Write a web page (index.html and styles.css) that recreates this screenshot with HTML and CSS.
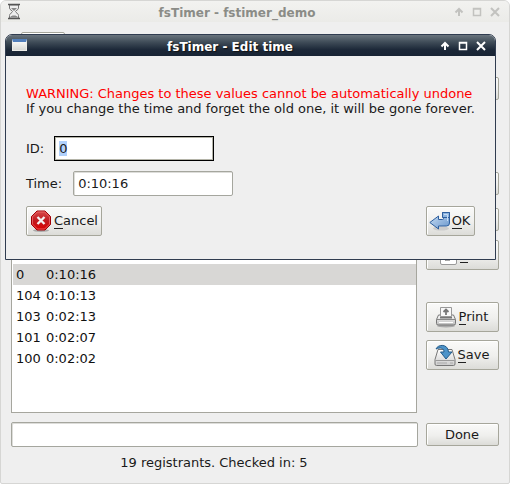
FILE: index.html
```html
<!DOCTYPE html>
<html lang="en">
<head>
<meta charset="utf-8">
<title>fsTimer</title>
<link rel="stylesheet" href="styles.css">
</head>
<body>
<main class="window">
  <header class="titlebar">
    <svg class="hourglass" width="14" height="17" viewBox="0 0 14 17"><path d="M2.500 2v3c0 2 3 2.500 3 3.500s-3 2-3 4V15h9v-2.500c0-2-3-3-3-4s3-1.500 3-3.500V2z" fill="#eee" stroke="#777"/><path d="M4 5h6L7 8zM3.500 14c0-2 7-2 7 0z" fill="#888"/><path d="M1 1.500h12M1 15.500h12" stroke="#555" stroke-width="1.600"/></svg>
    <h1 class="title">fsTimer - fstimer_demo</h1>
    <svg class="controls" width="46" height="12" viewBox="0 0 46 12" fill="none"><path d="M5 10V3M1.500 6.500 5 3l3.500 3.500" stroke-width="2"/><path d="M19.500 2.500h7v7h-7zM19 3h8"/><path d="m37 2 8 8M45 2l-8 8" stroke-width="2"/></svg>
  </header>
  <div class="toolbar"><div class="button tab"></div></div>
  <div class="workspace">
    <div class="list">
      <div class="row selected"><span>0</span><span>0:10:16</span></div>
      <div class="row"><span>104</span><span>0:10:13</span></div>
      <div class="row"><span>103</span><span>0:02:13</span></div>
      <div class="row"><span>101</span><span>0:02:07</span></div>
      <div class="row"><span>100</span><span>0:02:02</span></div>
    </div>
    <div class="side">
      <div class="button small first"></div>
      <div class="button small"></div>
      <div class="button small"></div>
      <div class="button covered"><svg width="17" height="20" viewBox="0 0 17 20"><rect x=".5" y=".5" width="16" height="19" rx="1.500" fill="#fff" stroke="#999"/><path d="M5 15h5l-2-2z" fill="#555" stroke="#555"/></svg><span class="label"><u>E</u>dit</span></div>
      <div class="button print"><svg width="22" height="22" viewBox="0 0 22 22"><defs><linearGradient id="pg" x2="0" y2="1"><stop stop-color="#fff"/><stop offset="1" stop-color="#bbb"/></linearGradient></defs><ellipse cx="11" cy="20" rx="9" ry="1.500" fill="#aaa"/><path d="M3.500 9h15l2 4.500v4q0 1.500-1.500 1.500H3q-1.500 0-1.500-1.500v-4z" fill="url(#pg)" stroke="#777"/><path d="M1.500 13.500h19" stroke="#888"/><path d="M5 11.500h12" stroke="#777" stroke-width="2"/><path d="M5.500 1.500h11v9h-11z" fill="#f8f8f8" stroke="#999"/><path d="M11 9V5M8.500 6 11 3.500 13.500 6" fill="none" stroke="#777" stroke-width="1.800"/><path d="M4 16.500h14" stroke="#fff"/></svg><span class="label"><u>P</u>rint</span></div>
      <div class="button save"><svg width="22" height="23" viewBox="0 0 22 23"><defs><linearGradient id="sg" x2="0" y2="1"><stop stop-color="#fff"/><stop offset="1" stop-color="#ccc"/></linearGradient></defs><path d="M4 5.500h14l3 10v4.500q0 1.500-1.500 1.500h-17Q1 21.500 1 20v-4.500z" fill="url(#sg)" stroke="#777"/><path d="M1.500 16.500h19" stroke="#999"/><path d="M4 18v2M6 18v2M8 18v2M10 18v2M12 18v2M16 19h3" stroke="#aaa"/><path d="M2 5C4 0 14-.5 14.500 8H18l-6 7-5.500-7H10C10 4 6 3 2 5z" fill="#4c93c9" stroke="#245b8a"/></svg><span class="label"><u>S</u>ave</span></div>
    </div>
  </div>
  <div class="command">
    <div class="field"></div>
    <div class="button done"><span>Done</span></div>
  </div>
  <footer class="status">19 registrants. Checked in: 5</footer>

  <section class="dialog">
    <header class="titlebar dark">
      <span class="app-icon"></span>
      <h2 class="title">fsTimer - Edit time</h2>
      <svg class="controls" width="46" height="12" viewBox="0 0 46 12" fill="none"><path d="M5 10V3M1.500 6.500 5 3l3.500 3.500" stroke-width="2"/><path d="M19.500 2.500h7v7h-7zM19 3h8"/><path d="m37 2 8 8M45 2l-8 8" stroke-width="2"/></svg>
    </header>
    <div class="dialog-body">
      <p class="message warning">WARNING: Changes to these values cannot be automatically undone</p>
      <p class="message">If you change the time and forget the old one, it will be gone forever.</p>
      <div class="form-row id-row"><span class="caption">ID:</span><div class="input focused"><span class="selection">0</span></div></div>
      <div class="form-row time-row"><span class="caption">Time:</span><div class="input">0:10:16</div></div>
      <div class="actions">
        <div class="button cancel"><svg width="22" height="22" viewBox="0 0 22 22"><defs><linearGradient id="cg" x2="0" y2="1"><stop stop-color="#d94a4a"/><stop offset=".5" stop-color="#c01c22"/><stop offset="1" stop-color="#d00"/></linearGradient></defs><ellipse cx="11" cy="20.500" rx="8" ry="1.500" fill="#aaa"/><path d="M7 1h8l5.500 5.500v8L15 20H7l-5.500-5.500v-8z" fill="url(#cg)" stroke="#a00006"/><path d="M7.400 2h7.200l4.900 4.900v7.200L14.600 19H7.400l-4.900-4.900V6.900z" fill="none" stroke="#e77" stroke-opacity=".7"/><path d="m7.500 7 7 7M14.500 7l-7 7" stroke="#f4f4f4" stroke-width="2.300"/></svg><span class="label"><u>C</u>ancel</span></div>
        <div class="button ok"><svg width="22" height="21" viewBox="0 0 22 21"><defs><linearGradient id="og" x2="1" y2="1"><stop stop-color="#cfe2f6"/><stop offset="1" stop-color="#6795cc"/></linearGradient></defs><ellipse cx="12" cy="17.500" rx="8" ry="2" fill="#ccc"/><path d="M13.500 1.500h7V12q0 3-3 3H9.500v3L.8 11.500 9.500 5v3.500h4q1 0 1-1V6h-1z" fill="url(#og)" stroke="#2e5f9e"/><path d="M13.500 1.500h7v5h-7z" fill="#8db4df" stroke="#2e5f9e"/><path d="M15 3.500h3.500V10" fill="none" stroke="#c5dcf4"/></svg><span class="label"><u>O</u>K</span></div>
      </div>
    </div>
  </section>
</main>
</body>
</html>
```

FILE: styles.css
```css
* { box-sizing: border-box; }
body { margin: 0; background: #fff; font-family: "DejaVu Sans", sans-serif; font-size: 13px; line-height: 15px; letter-spacing: -0.015px; color: #1a1a1a; }
.window { position: relative; width: 510px; height: 484px; overflow: hidden; background: #efefef; border: 1px solid #d6d6d4; border-radius: 6px 6px 2px 2px; display: flex; flex-direction: column; }
.titlebar { height: 21px; flex: none; display: flex; align-items: center; padding: 2px 9px 0 6px; background: linear-gradient(#f2f2f0, #ebebe8); }
.titlebar .title { flex: 1; margin: 0; text-align: center; font-size: 12px; line-height: 16px; letter-spacing: 0; color: #8b8c87; padding-left: 3px; }
.hourglass { flex: none; margin-top: -3px; }
.controls { flex: none; stroke: #c2c2bf; stroke-width: 1.500; width: 46px; margin-top: -2px; }
.window > .titlebar .controls { margin-right: 4px; transform: translateX(4px); }
.toolbar { height: 55px; flex: none; padding: 10px 20px; }
.tab { width: 44px; height: 24px; }
.workspace { height: 336px; flex: none; display: flex; gap: 9px; padding-left: 10px; }
.list { width: 406px; background: #fff; border: 1px solid #a6a69e; padding: 186px 0 0 1px; }
.row { display: grid; grid-template-columns: 30px 1fr; height: 21px; line-height: 21px; padding-left: 3px; color: #111; }
.selected { background: #d8d7d5; }
.side { width: 73px; display: flex; flex-direction: column; }
.button { border: 1px solid #a6a69b; border-radius: 2px; background: linear-gradient(#fafaf9, #efefed 55%, #dcdcd8); box-shadow: inset 1px 1px #fff; display: flex; align-items: center; justify-content: center; gap: 2px; flex: none; }
.button svg { flex: none; }
.label { white-space: nowrap; margin-top: -2px; }
.label u { text-decoration: none; box-shadow: 0 1px #222; }
.small { height: 23px; margin-bottom: 13px; }
.first { margin-bottom: 72px; }
.covered { height: 30px; margin-top: -4px; }
.covered .label { margin-left: 1px; }
.print { height: 30px; margin-top: 32px; padding-right: 2px; }
.save { height: 30px; margin-top: 8px; padding-right: 2px; }
.command { display: flex; gap: 8px; align-items: center; height: 25px; margin-top: 9px; padding-left: 10px; }
.field { width: 407px; height: 25px; }
.field, .input { background: #fff; border: 1px solid #a5a69e; border-radius: 2px; box-shadow: inset 1px 1px #ddddda; }
.done { width: 73px; height: 23px; padding-right: 1px; }
.status { margin-top: 8px; width: 426px; text-align: center; }
.dialog { position: absolute; left: 4px; top: 33px; width: 491px; height: 226px; background: #efefef; border: 1px solid #303c50; border-radius: 7px 7px 0 0; overflow: hidden; }
.dark { height: 21px; padding: 0 9px 0 6px; background: linear-gradient(#69747d, #3e4b57 35%, #1c2838 70%, #182434); }
.dark .title { color: #fff; text-shadow: 1px 1px 1px #111; padding: 2px 7px 0 0; }
.dark .controls { stroke: #fff; margin-top: 1px; }
.app-icon { width: 15px; height: 12px; background: linear-gradient(#f7f7f4, #d8d9d5); border: 1px solid #ecece8; border-top: 3px solid #527fbb; flex: none; margin-top: -2px; }
.dialog-body { padding: 30px 20px 0; }
.message { margin: 0; white-space: nowrap; }
.warning { color: #f00; }
.form-row { display: flex; align-items: center; }
.id-row { margin-top: 20px; gap: 10px; }
.time-row { margin-top: 10px; gap: 11px; }
.input { width: 160px; height: 25px; padding: 4px; line-height: 15px; }
.focused { border-color: #000; border-radius: 0; box-shadow: inset 0 0 0 1px #b4b4a8; }
.selection { background: #b0d0fb; }
.actions { display: flex; justify-content: space-between; margin-top: 10px; }
.actions .button { height: 30px; }
.cancel { width: 76px; }
.ok { width: 49px; padding-right: 2px; }
.ok .label { margin-left: -1px; }
```
